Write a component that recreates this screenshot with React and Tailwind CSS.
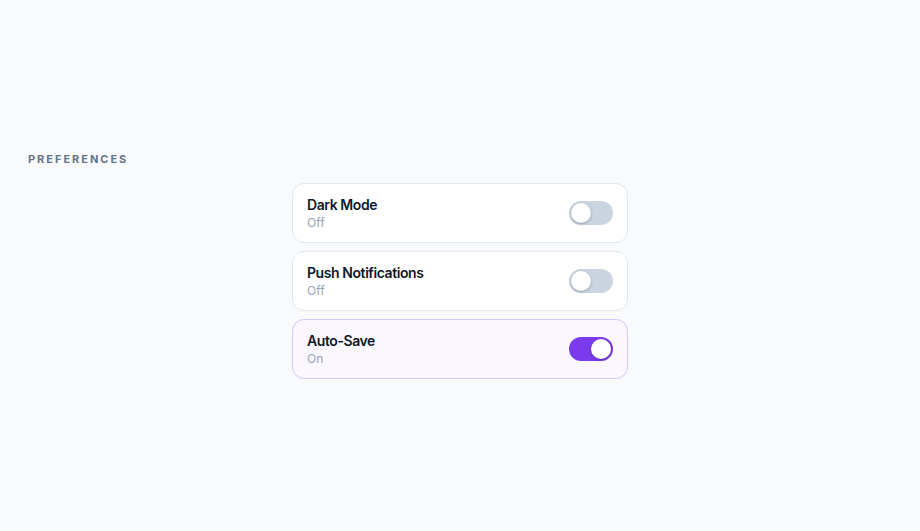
import React, { useState } from 'react';

function Toggle({ on, onClick }) {
  return (
    <button
      type="button"
      onClick={onClick}
      className={`relative h-6 w-11 shrink-0 rounded-full transition-colors ${on ? 'bg-[#7c3aed]' : 'bg-[#cbd5e1]'}`}
    >
      <span
        className={`absolute top-0.5 h-5 w-5 rounded-full bg-white shadow-[0_1px_3px_rgba(15,23,42,0.3)] transition-all ${on ? 'left-[22px]' : 'left-0.5'}`}
      />
    </button>
  );
}

export default function App() {
  const [prefs, setPrefs] = useState([
    { name: 'Dark Mode', on: false },
    { name: 'Push Notifications', on: false },
    { name: 'Auto-Save', on: true },
  ]);

  const flip = (i) =>
    setPrefs((p) => p.map((item, j) => (j === i ? { ...item, on: !item.on } : item)));

  return (
    <div className="min-h-screen bg-[#f8fafc] px-7 pb-0.5 flex flex-col justify-center font-['Inter',sans-serif]">
      <h2 className="text-[11px] leading-4 font-bold tracking-[0.18em] text-[#64748b] mb-4">PREFERENCES</h2>

      <div className="w-[336px] mx-auto flex flex-col gap-2">
        {prefs.map((item, i) => (
          <div
            key={item.name}
            className={`flex items-center justify-between rounded-xl border px-3.5 py-[11px] ${
              item.on ? 'bg-[#faf7ff] border-[#d6c6fb]' : 'bg-white border-[#e2e8f0]'
            }`}
          >
            <div>
              <p className="text-sm font-semibold leading-5 tracking-[-0.03em] text-[#0f172a]">{item.name}</p>
              <p className="text-xs leading-4 text-[#94a3b8]">{item.on ? 'On' : 'Off'}</p>
            </div>
            <Toggle on={item.on} onClick={() => flip(i)} />
          </div>
        ))}
      </div>
    </div>
  );
}
